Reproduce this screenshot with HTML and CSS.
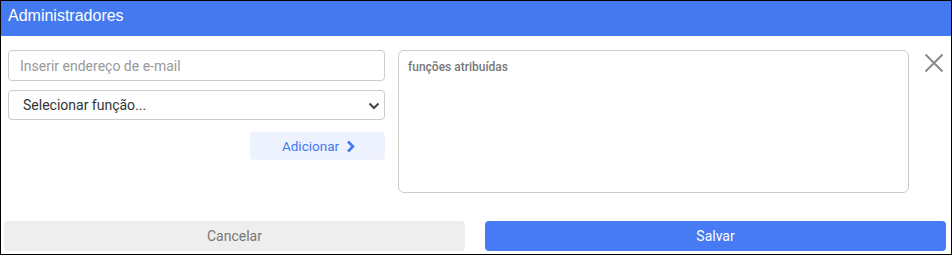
FILE: index.html
```html
<!DOCTYPE html>
<html lang="pt">

<head>
    <meta charset="UTF-8">
    <meta name="viewport" content="width=device-width, initial-scale=1.0">
    <title>Administradores</title>
    <link rel="stylesheet" href="styles.css">
</head>

<body>
    <div class="dialog">
        <div class="dialog-header">Administradores</div>
        <div class="dialog-body">
            <div class="form-col">
                <input class="field" type="text" placeholder="Inserir endereço de e-mail">
                <div class="select-wrap">
                    <select class="field select">
                        <option>Selecionar função...</option>
                    </select>
                    <svg class="select-arrow" width="12" height="8" viewBox="0 0 12 8">
                        <path d="M1.5 1.5 L6 6 L10.5 1.5" fill="none" stroke="#444" stroke-width="2"/>
                    </svg>
                </div>
                <button class="add-btn">Adicionar
                    <svg width="9" height="13" viewBox="0 0 9 13">
                        <path d="M2 1.5 L7 6.5 L2 11.5" fill="none" stroke="#4479f0" stroke-width="2.6"/>
                    </svg>
                </button>
            </div>
            <textarea class="roles" placeholder="funções atribuídas"></textarea>
            <button class="close-btn" aria-label="fechar">
                <svg width="20" height="20" viewBox="0 0 20 20">
                    <path d="M1.5 1.5 L18.5 18.5 M18.5 1.5 L1.5 18.5" stroke="#8a8a8a" stroke-width="2"/>
                </svg>
            </button>
        </div>
        <div class="dialog-footer">
            <button class="btn btn-cancel">Cancelar</button>
            <button class="btn btn-save">Salvar</button>
        </div>
    </div>
</body>

</html>
```

FILE: styles.css
```css
body {
    margin: 0;
    font-family: Roboto, "Liberation Sans", Arial, sans-serif;
}

.dialog {
    width: 952px;
    height: 255px;
    border: 1px solid #000;
    box-sizing: border-box;
    display: flex;
    flex-direction: column;
    background: #fff;
}

.dialog-header {
    height: 35px;
    background: #4479f0;
    color: #fff;
    font-family: "Liberation Sans", Arial, sans-serif;
    font-size: 16px;
    padding-left: 7px;
    line-height: 29px;
    flex-shrink: 0;
}

.dialog-body {
    display: flex;
    padding: 14px 0 0 7px;
    height: 185px;
    box-sizing: border-box;
}

.form-col {
    width: 377px;
    display: flex;
    flex-direction: column;
}

.field {
    height: 31px;
    box-sizing: border-box;
    border: 1px solid #ccc;
    border-radius: 4px;
    font-family: inherit;
    font-size: 14px;
    color: #333;
    padding: 0 11px;
    outline: none;
    width: 100%;
    background: #fff;
}

.field::placeholder {
    color: #999;
}

.select-wrap {
    position: relative;
    margin-top: 9px;
}

.select {
    appearance: none;
    -webkit-appearance: none;
    height: 30px;
    padding-left: 14px;
}

.select-arrow {
    position: absolute;
    right: 5px;
    top: 12px;
    pointer-events: none;
}

.add-btn {
    align-self: flex-end;
    margin-top: 12px;
    width: 135px;
    height: 28px;
    border: none;
    border-radius: 4px;
    background: #eef2fe;
    color: #4479f0;
    font-family: inherit;
    font-size: 13.5px;
    display: flex;
    align-items: center;
    justify-content: center;
    gap: 7px;
    padding: 0 0 0 2px;
}

.roles {
    margin-left: 13px;
    width: 511px;
    height: 143px;
    box-sizing: border-box;
    border: 1px solid #ccc;
    border-radius: 6px;
    resize: none;
    font-family: inherit;
    font-size: 12px;
    padding: 9px 9px;
    outline: none;
}

.roles::placeholder {
    color: #777;
    font-weight: 500;
}

.close-btn {
    margin-left: 15px;
    margin-top: 3px;
    width: 20px;
    height: 20px;
    padding: 0;
    border: none;
    background: none;
    align-self: flex-start;
}

.dialog-footer {
    display: flex;
    gap: 20px;
    padding: 0 5px 0 3px;
}

.btn {
    flex: 1;
    height: 30px;
    border: none;
    border-radius: 4px;
    font-family: inherit;
    font-size: 14px;
}

.btn-cancel {
    background: #eee;
    color: #777;
}

.btn-save {
    background: #467bf3;
    color: #fff;
}
```
